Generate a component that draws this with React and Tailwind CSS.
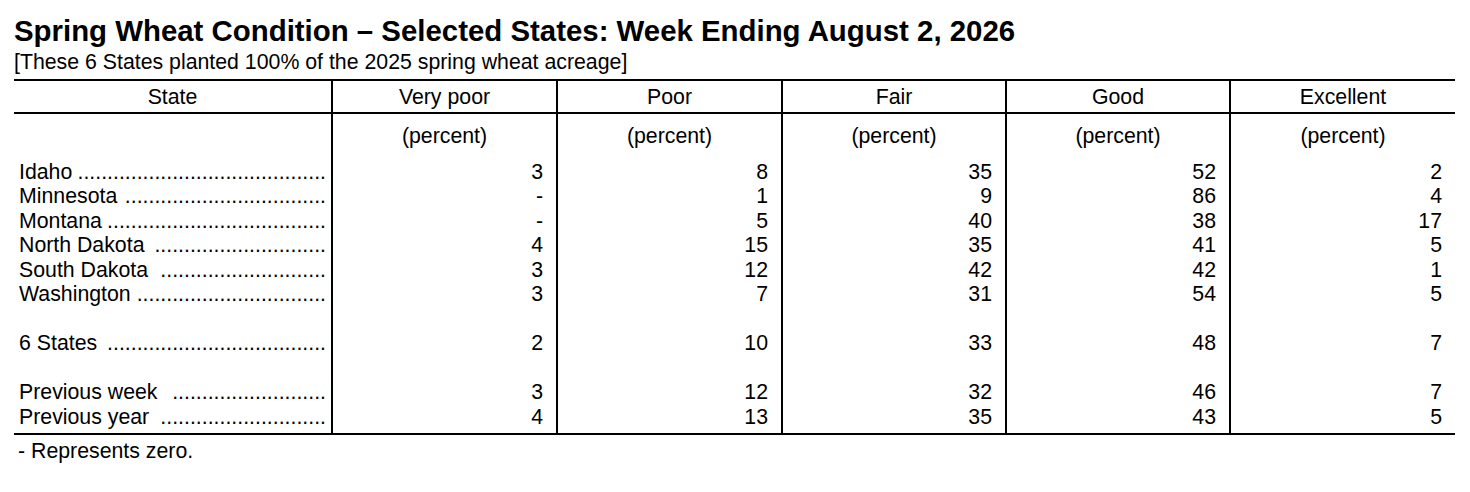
import React from 'react'

const cols = 'grid grid-cols-[317px_225px_225px_224px_224px_226px]'

const headers = ['Very poor', 'Poor', 'Fair', 'Good', 'Excellent']

// dots = number of leader dots after the name
const rows = [
    { name: 'Idaho', dots: 42, v: ['3', '8', '35', '52', '2'] },
    { name: 'Minnesota', dots: 34, v: ['-', '1', '9', '86', '4'] },
    { name: 'Montana', dots: 37, v: ['-', '5', '40', '38', '17'] },
    { name: 'North Dakota', dots: 29, v: ['4', '15', '35', '41', '5'] },
    { name: 'South Dakota', dots: 28, v: ['3', '12', '42', '42', '1'] },
    { name: 'Washington', dots: 32, v: ['3', '7', '31', '54', '5'] },
    null,
    { name: '6 States', dots: 37, v: ['2', '10', '33', '48', '7'] },
    null,
    { name: 'Previous week', dots: 26, v: ['3', '12', '32', '46', '7'] },
    { name: 'Previous year', dots: 28, v: ['4', '13', '35', '43', '5'] },
]

function Row({ row }) {
    return (
        <div className={cols + ' h-[24.5px] leading-[24.5px]'}>
            <div className="flex justify-between pl-[5px] pr-[5px] whitespace-nowrap">
                {row && (
                    <>
                        <span>{row.name}</span>
                        <span>{'.'.repeat(row.dots)}</span>
                    </>
                )}
            </div>
            {[0, 1, 2, 3, 4].map(i => (
                <div key={i} className="border-l-2 border-black text-right pr-[13px]">
                    {row ? row.v[i] : ''}
                </div>
            ))}
        </div>
    )
}

export default function App() {
    return (
        <div className="bg-white text-black w-[1470px] h-[492px] font-['Liberation_Sans',Arial,sans-serif]">
            <div className="pl-[14px] pt-[14px]">
                <h1 className="text-[29.4px] leading-[33px] font-bold">
                    Spring Wheat Condition – Selected States: Week Ending August 2, 2026
                </h1>
                <p className="text-[21.3px] leading-[24px] mt-[3px]">
                    [These 6 States planted 100% of the 2025 spring wheat acreage]
                </p>

                <div className="w-[1441px] mt-[5px] border-t-2 border-b-2 border-black text-[21.3px]">
                    {/* header */}
                    <div className={cols + ' h-[33px] border-b-2 border-black'}>
                        <div className="flex items-center justify-center pt-[1px]">State</div>
                        {headers.map(h => (
                            <div key={h} className="border-l-2 border-black flex items-center justify-center pt-[1px]">{h}</div>
                        ))}
                    </div>

                    {/* units */}
                    <div className={cols + ' h-[45.75px]'}>
                        <div></div>
                        {headers.map(h => (
                            <div key={h} className="border-l-2 border-black text-center pt-[10px] leading-[24.5px]">(percent)</div>
                        ))}
                    </div>

                    {rows.map((r, i) => <Row key={i} row={r} />)}

                    <div className={cols + ' h-[4px]'}>
                        <div></div>
                        {headers.map(h => <div key={h} className="border-l-2 border-black"></div>)}
                    </div>
                </div>

                <p className="text-[21.3px] leading-[24.5px] mt-[4px] pl-[4px]">- Represents zero.</p>
            </div>
        </div>
    )
}
